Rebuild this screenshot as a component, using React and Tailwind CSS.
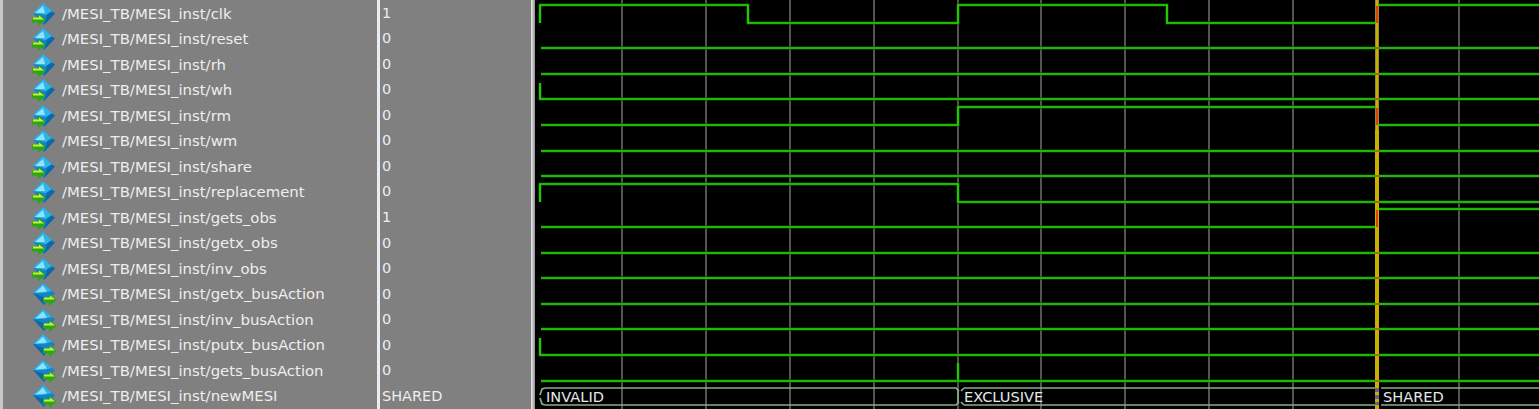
const signals = [
  { name: 'clk', value: '1' },
  { name: 'reset', value: '0' },
  { name: 'rh', value: '0' },
  { name: 'wh', value: '0' },
  { name: 'rm', value: '0' },
  { name: 'wm', value: '0' },
  { name: 'share', value: '0' },
  { name: 'replacement', value: '0' },
  { name: 'gets_obs', value: '1' },
  { name: 'getx_obs', value: '0' },
  { name: 'inv_obs', value: '0' },
  { name: 'getx_busAction', value: '0', out: true },
  { name: 'inv_busAction', value: '0', out: true },
  { name: 'putx_busAction', value: '0', out: true },
  { name: 'gets_busAction', value: '0', out: true },
  { name: 'newMESI', value: 'SHARED', out: true },
];

// canvas starts at x=535, all wave coordinates are relative to it
const gridLines = [87, 171, 255, 339, 423, 506, 590, 674, 758, 924];

const wavePaths = [
  'M5 23V5H213V23H423V5H632V23H840',
  'M6 48H840',
  'M6 74H840',
  'M5 83V99H840',
  'M6 125H423V107H840',
  'M6 151H840',
  'M6 176H840',
  'M5 202V184H423V202H840',
  'M6 227H840',
  'M6 253H840',
  'M6 278H840',
  'M6 304H840',
  'M6 329H840',
  'M5 338V355H840',
  'M6 381H840',
  'M423 363V381',
];

const afterCursor = [5, 48, 74, 99, 125, 151, 176, 202, 209, 253, 278, 304, 329, 355, 381];
const crossTicks = [48, 74, 99, 151, 176, 202, 253, 278, 304, 329, 355, 381];

const InIcon = () => (
  <svg width="24" height="24" viewBox="0 0 24 24" className="shrink-0">
    <path d="M11 1L23 11.5L12 23L7 18L1 11Z" fill="#1583c8" />
    <path d="M13 7L23 11.5L12 23L15 13Z" fill="#0c68a8" />
    <path d="M11 1L1 11L14 13L20 9Z" fill="#2fb4ea" />
    <path d="M3 11L11 4L13 11Z" fill="#8fe4fa" />
    <path d="M0 15.5H6V12L14 18L6 24V20.5H0Z" fill="#2aa810" />
    <path d="M1 15.5H7V13.5L12 17.5H1Z" fill="#c4f03c" />
  </svg>
);

const OutIcon = () => (
  <svg width="24" height="24" viewBox="0 0 24 24" className="shrink-0">
    <path d="M11 1L23 11.5L12 23L1 11Z" fill="#1583c8" />
    <path d="M1 11L11 1L20 9L11 11Z" fill="#2fb4ea" />
    <path d="M3.5 10.5L11 3.5L15 9.5Z" fill="#8fe4fa" />
    <path d="M1 11L12 23L14 16Z" fill="#0c68a8" />
    <path d="M11 15.5H17V12L25 18L17 24V20.5H11Z" fill="#2aa810" />
    <path d="M12 15.5H18V13.5L23 17.5H12Z" fill="#c4f03c" />
  </svg>
);

const BusLabel = ({ className, children }) => (
  <span className={`absolute top-[388px] text-[14.6px] leading-[18px] text-[#e4e8ec] ${className}`}>
    {children}
  </span>
);

export default function App() {
  return (
    <div className="flex h-[409px] w-[1539px] overflow-hidden bg-black font-['DejaVu_Sans','Liberation_Sans',sans-serif]">
      <div className="w-[3px] shrink-0 bg-[#c8c8c8]" />

      {/* signal names */}
      <div className="w-[374px] shrink-0 bg-[#808080] pt-px pl-[29px]">
        {signals.map((s) => (
          <div key={s.name} className="flex h-[25.53px] items-center gap-[6px]">
            {s.out ? <OutIcon /> : <InIcon />}
            <span className="text-[14.9px] whitespace-nowrap text-[#eeeeee]">/MESI_TB/MESI_inst/{s.name}</span>
          </div>
        ))}
      </div>

      <div className="w-[3px] shrink-0 bg-[#ececec]" />

      {/* values */}
      <div className="w-[151px] shrink-0 bg-[#808080] pt-px pl-[2px]">
        {signals.map((s) => (
          <div key={s.name} className="flex h-[25.53px] items-center text-[14.5px] text-[#eeeeee]">
            {s.value}
          </div>
        ))}
      </div>

      <div className="w-[4px] shrink-0 bg-gradient-to-r from-[#ececec] to-[#909090]" />

      {/* wave window */}
      <div className="relative flex-1 bg-black">
        <svg width="1004" height="409" viewBox="0 0 1004 409" className="block" fill="none">
          {gridLines.map((x) => (
            <path key={x} d={`M${x} 0V409`} stroke="#707070" strokeWidth="1.5" />
          ))}
          {wavePaths.map((d) => (
            <g key={d}>
              <path d={d} stroke="#0c5204" strokeWidth="3" />
              <path d={d} stroke="#27dc00" strokeWidth="1.7" />
            </g>
          ))}

          {/* newMESI bus */}
          <path d="M10 388H421L424 391M10 405H421L424 402M5 395L7 389L10 388M5 398L7 404L10 405" stroke="#86b086" strokeWidth="1.7" />
          <path d="M423 390V403" stroke="#86b086" strokeWidth="1.7" />
          <path d="M429 388H840M429 405H840M426 391L429 388M426 402L429 405" stroke="#86b086" strokeWidth="1.7" />
          <path d="M846 388H1004M846 405H1004" stroke="#86b086" strokeWidth="1.7" />

          {/* cursor */}
          {afterCursor.map((y) => (
            <g key={y}>
              <path d={`M844 ${y}H1004`} stroke="#0c5204" strokeWidth="3" />
              <path d={`M844 ${y}H1004`} stroke="#27dc00" strokeWidth="1.7" />
            </g>
          ))}
          <path d="M842 0V409" stroke="#c8b000" strokeWidth="4" />
          <path d="M840.5 0V130M843.5 0V130" stroke="#8f8a40" strokeWidth="1" />
          <path d="M842 6V23M842 108V125M842 210V227" stroke="#e04000" strokeWidth="2" />
          {crossTicks.map((y) => (
            <path key={y} d={`M840 ${y}H844`} stroke="#d05010" strokeWidth="2" />
          ))}
          <path d="M841 388V405M843 388V405" stroke="#5040b0" strokeWidth="1.5" strokeDasharray="4 3" />
        </svg>

        <BusLabel className="left-[11px]">INVALID</BusLabel>
        <BusLabel className="left-[429px]">EXCLUSIVE</BusLabel>
        <BusLabel className="left-[848px]">SHARED</BusLabel>
      </div>
    </div>
  );
}
